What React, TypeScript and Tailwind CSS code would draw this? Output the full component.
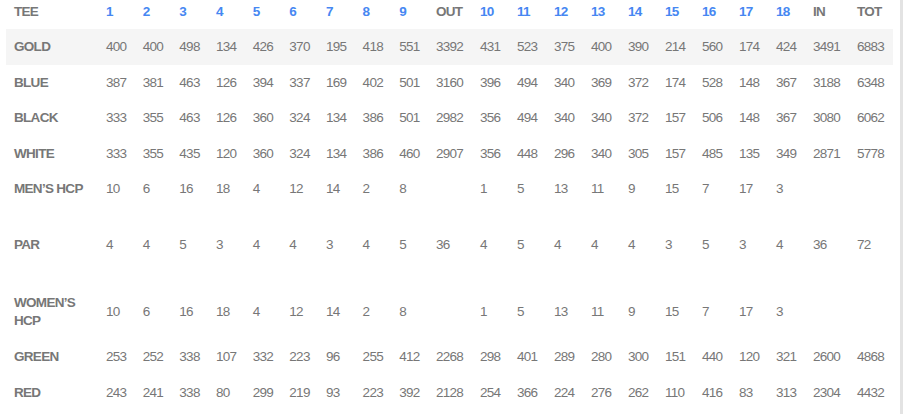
const holes = ["1", "2", "3", "4", "5", "6", "7", "8", "9", "OUT", "10", "11", "12", "13", "14", "15", "16", "17", "18", "IN", "TOT"];

interface Row {
  label: string;
  values: string[];
  shaded?: boolean;
  tall?: boolean;
  nowrap?: boolean;
}

const rows: (Row | "spacer-a" | "spacer-b")[] = [
  { label: "GOLD", shaded: true, values: ["400", "400", "498", "134", "426", "370", "195", "418", "551", "3392", "431", "523", "375", "400", "390", "214", "560", "174", "424", "3491", "6883"] },
  { label: "BLUE", values: ["387", "381", "463", "126", "394", "337", "169", "402", "501", "3160", "396", "494", "340", "369", "372", "174", "528", "148", "367", "3188", "6348"] },
  { label: "BLACK", values: ["333", "355", "463", "126", "360", "324", "134", "386", "501", "2982", "356", "494", "340", "340", "372", "157", "506", "148", "367", "3080", "6062"] },
  { label: "WHITE", values: ["333", "355", "435", "120", "360", "324", "134", "386", "460", "2907", "356", "448", "296", "340", "305", "157", "485", "135", "349", "2871", "5778"] },
  { label: "MEN’S HCP", nowrap: true, values: ["10", "6", "16", "18", "4", "12", "14", "2", "8", "", "1", "5", "13", "11", "9", "15", "7", "17", "3", "", ""] },
  "spacer-a",
  { label: "PAR", values: ["4", "4", "5", "3", "4", "4", "3", "4", "5", "36", "4", "5", "4", "4", "4", "3", "5", "3", "4", "36", "72"] },
  "spacer-b",
  { label: "WOMEN’S HCP", tall: true, values: ["10", "6", "16", "18", "4", "12", "14", "2", "8", "", "1", "5", "13", "11", "9", "15", "7", "17", "3", "", ""] },
  { label: "GREEN", values: ["253", "252", "338", "107", "332", "223", "96", "255", "412", "2268", "298", "401", "289", "280", "300", "151", "440", "120", "321", "2600", "4868"] },
  { label: "RED", values: ["243", "241", "338", "80", "299", "219", "93", "223", "392", "2128", "254", "366", "224", "276", "262", "110", "416", "83", "313", "2304", "4432"] },
];

function colWidth(h: string) {
  if (h === "OUT" || h === "IN" || h === "TOT") return "w-[44px]";
  if (Number(h) <= 9) return "w-[36.67px]";
  return "w-[37px]";
}

export default function App() {
  return (
    <div
      className="w-[903px] h-[414px] bg-white border-r-[3px] border-[#e3e3e3] overflow-hidden text-[13.5px] tracking-[-0.7px] text-[#777]"
      style={{ fontFamily: '"Liberation Sans", Arial, sans-serif' }}
    >
      <table className="ml-[6px] w-[887px] table-fixed border-collapse">
        <colgroup>
          <col className="w-[92px]" />
          {holes.map((h) => (
            <col key={h} className={colWidth(h)} />
          ))}
        </colgroup>
        <thead>
          <tr>
            <th className="text-left font-bold px-2 pt-[3px] pb-[9px] leading-[17px]">TEE</th>
            {holes.map((h) => {
              const isHole = !isNaN(Number(h));
              return (
                <th
                  key={h}
                  className={`text-left font-bold px-2 pt-[3px] pb-[9px] leading-[17px] ${
                    isHole ? "text-[#4687f2]" : "text-[#777]"
                  }`}
                >
                  {h}
                </th>
              );
            })}
          </tr>
        </thead>
        <tbody>
          {rows.map((row, i) => {
            if (row === "spacer-a") return <tr key={i} className="h-[20px]" />;
            if (row === "spacer-b") return <tr key={i} className="h-[22px]" />;
            const pad = row.tall ? "py-[10px]" : "py-[9px]";
            return (
              <tr key={row.label} className={row.shaded ? "bg-[#f5f5f5]" : ""}>
                <td
                  className={`font-bold px-2 ${pad} leading-[17.5px] align-middle ${
                    row.nowrap ? "whitespace-nowrap" : ""
                  }`}
                >
                  {row.label}
                </td>
                {row.values.map((v, j) => (
                  <td key={j} className={`px-2 ${pad} leading-[17.5px] align-middle whitespace-nowrap`}>
                    {v}
                  </td>
                ))}
              </tr>
            );
          })}
        </tbody>
      </table>
    </div>
  );
}
